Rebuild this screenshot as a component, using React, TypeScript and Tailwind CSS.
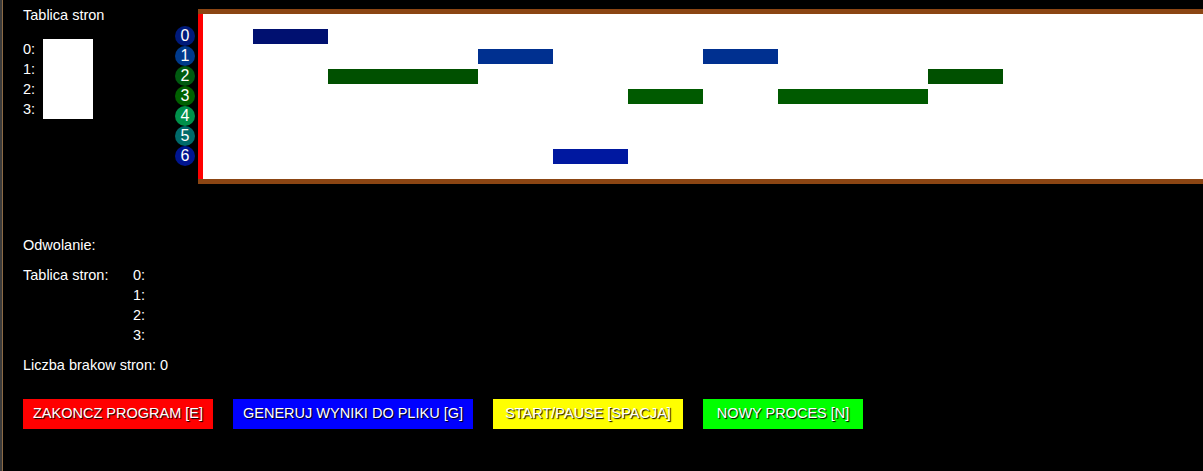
import React from "react";

const circles = [
  { n: 0, c: "bg-[#001a7a]" },
  { n: 1, c: "bg-[#003a8c]" },
  { n: 2, c: "bg-[#005a10]" },
  { n: 3, c: "bg-[#006000]" },
  { n: 4, c: "bg-[#00904a]" },
  { n: 5, c: "bg-[#006a6a]" },
  { n: 6, c: "bg-[#00158f]" },
];

type Bar = { start: number; len: number };
const rows: { color: string; bars: Bar[] }[] = [
  { color: "bg-[#001070]", bars: [{ start: 0, len: 1 }] },
  { color: "bg-[#003090]", bars: [{ start: 3, len: 1 }, { start: 6, len: 1 }] },
  { color: "bg-[#005000]", bars: [{ start: 1, len: 2 }, { start: 9, len: 1 }] },
  { color: "bg-[#005a00]", bars: [{ start: 5, len: 1 }, { start: 7, len: 2 }] },
  { color: "bg-[#008040]", bars: [] },
  { color: "bg-[#006060]", bars: [] },
  { color: "bg-[#0018a0]", bars: [{ start: 4, len: 1 }] },
];

export default function App() {
  return (
    <div
      className="flex h-[471px] w-[1203px] overflow-hidden bg-black text-[14.5px] text-white"
      style={{ fontFamily: '"Liberation Sans", Arial, sans-serif' }}
    >
      <div className="w-[2px] bg-[#3a3a3a]" />
      <div className="w-px bg-[#8b6a45]" />
      <div className="flex flex-1 flex-col">
        <div className="flex h-[184px]">
          <div className="w-[172px] pl-[20px] pt-[7px]">
            <div className="leading-[16px]">Tablica stron</div>
            <div className="mt-[16px] flex">
              <div className="w-[20px] flex flex-col">
                {["0:", "1:", "2:", "3:"].map((l) => (
                  <div key={l} className="h-[20px] leading-[21px]">{l}</div>
                ))}
              </div>
              <div className="h-[80px] w-[50px] bg-white" />
            </div>
          </div>
          <div className="flex w-[20px] flex-col pt-[26px]">
            {circles.map((c) => (
              <div
                key={c.n}
                className={`flex h-[20px] w-[20px] items-center justify-center rounded-full ${c.c} text-[16px] leading-none`}
              >
                {c.n}
              </div>
            ))}
          </div>
          <div className="ml-[3px] flex-1 pt-[9px]">
            <div className="h-[175px] border-y-[5px] border-[#8b4513]">
              <div className="h-full border-l-[5px] border-[#ff0000] bg-white pt-[15px]">
                {rows.map((r, i) => (
                  <div key={i} className="relative h-[20px]">
                    {r.bars.map((b, j) => (
                      <div
                        key={j}
                        className={`absolute top-0 h-[15px] ${r.color}`}
                        style={{ left: 50 + b.start * 75, width: b.len * 75 }}
                      />
                    ))}
                  </div>
                ))}
              </div>
            </div>
          </div>
        </div>
        <div className="flex flex-col pl-[20px]">
          <div className="mt-[51px] h-[20px] leading-[20px]">Odwolanie:</div>
          <div className="mt-[10px] flex">
            <div className="w-[110px] leading-[20px]">Tablica stron:</div>
            <div className="flex flex-col">
              {["0:", "1:", "2:", "3:"].map((l) => (
                <div key={l} className="h-[20px] leading-[20px]">{l}</div>
              ))}
            </div>
          </div>
          <div className="mt-[10px] h-[20px] leading-[20px]">Liczba brakow stron: 0</div>
          <div className="mt-[24px] flex gap-[20px] [text-shadow:1px_1px_1px_#000]">
            <div className="flex h-[30px] w-[190px] items-center justify-center bg-[#ff0000]">ZAKONCZ PROGRAM [E]</div>
            <div className="flex h-[30px] w-[240px] items-center justify-center bg-[#0000ff]">GENERUJ WYNIKI DO PLIKU [G]</div>
            <div className="flex h-[30px] w-[190px] items-center justify-center bg-[#ffff00]">START/PAUSE [SPACJA]</div>
            <div className="flex h-[30px] w-[160px] items-center justify-center bg-[#00ff00]">NOWY PROCES [N]</div>
          </div>
        </div>
      </div>
    </div>
  );
}
